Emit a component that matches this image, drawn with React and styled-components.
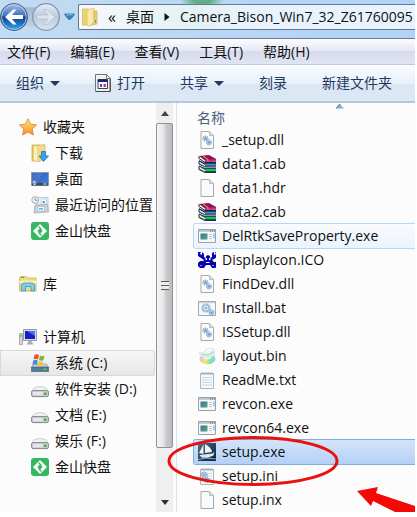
import React from 'react'
import styled, { createGlobalStyle, css } from 'styled-components'

const favorites = [
  { name: '收藏夹', icon: 'star', root: true },
  { name: '下载', icon: 'download' },
  { name: '桌面', icon: 'desktop' },
  { name: '最近访问的位置', icon: 'recent' },
  { name: '金山快盘', icon: 'kuaipan' },
]

const libraries = [{ name: '库', icon: 'library', root: true }]

const computer = [
  { name: '计算机', icon: 'computer', root: true },
  { name: '系统 (C:)', icon: 'system', active: true },
  { name: '软件安装 (D:)', icon: 'drive' },
  { name: '文档 (E:)', icon: 'drive' },
  { name: '娱乐 (F:)', icon: 'drive' },
  { name: '金山快盘', icon: 'kuaipan' },
]

const files = [
  { name: '_setup.dll', icon: 'dll' },
  { name: 'data1.cab', icon: 'cab' },
  { name: 'data1.hdr', icon: 'blank' },
  { name: 'data2.cab', icon: 'cab' },
  { name: 'DelRtkSaveProperty.exe', icon: 'exe', state: 'hover' },
  { name: 'DisplayIcon.ICO', icon: 'crab' },
  { name: 'FindDev.dll', icon: 'dll' },
  { name: 'Install.bat', icon: 'bat' },
  { name: 'ISSetup.dll', icon: 'dll' },
  { name: 'layout.bin', icon: 'bin' },
  { name: 'ReadMe.txt', icon: 'txt' },
  { name: 'revcon.exe', icon: 'exe' },
  { name: 'revcon64.exe', icon: 'exe' },
  { name: 'setup.exe', icon: 'installer', state: 'selected' },
  { name: 'setup.ini', icon: 'ini' },
  { name: 'setup.inx', icon: 'blank' },
]

const menus = ['文件(F)', '编辑(E)', '查看(V)', '工具(T)', '帮助(H)']

const Page = () => (
  <>
    <path d="M3 .5h8.500l4 4v13H3z" fill="#fafafa" stroke="#a9a9a9" />
    <path d="M11.500 .5v4h4z" fill="#dcdcdc" stroke="#bcbcbc" />
  </>
)

const Gear = ({ x, y, r }) => (
  <g fill="none">
    <circle cx={x} cy={y} r={r} stroke="#7da3c8" strokeWidth="1.200" strokeDasharray="1.200 .7" />
    <circle cx={x} cy={y} r={r - 0.8} fill="#d5e5f4" stroke="#7ea6cc" strokeWidth=".8" />
    <circle cx={x} cy={y} r=".8" fill="#3f6a97" />
  </g>
)

const Notepad = () => (
  <>
    <path d="M2.500 2.500h13v15h-13z" fill="#f7f9fb" stroke="#b0b4b8" />
    <path d="M4 1v3M6 1v3M8 1v3M10 1v3M12 1v3M14 1v3" stroke="#a0a4a8" strokeWidth=".8" />
    <path d="M4 6.500h10M4 9h10M4 11.500h10M4 14h10" stroke="#c3d9e8" />
  </>
)

const drawings = {
  star: (
    <path
      d="M9 .8l2.600 5.400 6 .7-4.400 4.100 1.200 6L9 14.100 3.600 17l1.200-6L.4 6.900l6-.7z"
      fill="url(#starFill)"
      stroke="#e08a3c"
      strokeWidth=".9"
    />
  ),
  download: (
    <>
      <path d="M1 1h8v16H1z" fill="#e9c75f" stroke="#c9a545" strokeWidth=".7" />
      <path d="M6 1.500l8-1v14l-6 3-5-1z" fill="#f3dc85" stroke="#d3b65a" strokeWidth=".7" />
      <path d="M2.500 1.500l4 1v15l-4-1z" fill="#fbf1c0" stroke="#d9c06c" strokeWidth=".5" />
      <path d="M10.500 7.500h4v4.500h3L12.500 17.500 8 12h2.500z" fill="#38a1ea" stroke="#1d72bd" strokeWidth=".8" />
    </>
  ),
  desktop: (
    <>
      <path d="M.5 2.500h17v13H.5z" fill="url(#screenFill)" stroke="#8093a9" strokeWidth=".8" />
      <path d="M1 3h11L5 13H1z" fill="#7da5e0" opacity=".25" />
      <path d="M1 13h16v2.500H1z" fill="#33485f" />
      <path d="M12 14h4" stroke="#d0d8df" />
      <circle cx="3.500" cy="13" r="1.900" fill="#dfe9ee" />
      <circle cx="3" cy="13.500" r="1" fill="#3b9fdb" />
      <circle cx="4.500" cy="12.500" r="1" fill="#ed6239" />
    </>
  ),
  recent: (
    <>
      <path d="M6 1.500h11v13H6z" fill="#f0f3f5" stroke="#c3c8cc" />
      <path d="M10 3h5.500v5H10z" fill="#fff" stroke="#b9d8ee" />
      <path d="M11.500 5h2.500v2h-2.500z" fill="#4aa5e3" />
      <path d="M4 9l12.500-.5 1 7.500-14.500 1z" fill="#cdd0d2" stroke="#a1a5a8" strokeWidth=".7" />
      <path d="M6.500 10.500h7V15h-7z" fill="#eef8fd" stroke="#93c2e0" strokeWidth=".7" />
      <path d="M8 12h4v1.500H8z" fill="#62b2df" />
      <circle cx="4.200" cy="4" r="3.400" fill="#f3f7fa" stroke="#9eabb7" />
      <path d="M4.200 2v2.300h2" fill="none" stroke="#5d6e7e" strokeWidth=".8" />
    </>
  ),
  kuaipan: (
    <>
      <rect width="18" height="18" rx="3" fill="#36b661" />
      <path d="M9 2.500L15.500 9 9 15.500 2.500 9z" fill="#fff" stroke="#fff" strokeLinejoin="round" />
      <path d="M9 6.300L11.700 9 9 11.700 6.300 9z" fill="#36b661" />
      <path d="M10.500 7.500l-3-3M7.500 10.500l3 3" stroke="#36b661" strokeWidth="1.200" />
    </>
  ),
  library: (
    <>
      <path d="M.5 2.500l1-1h6l1 1.500h8.500v13H.5z" fill="#f2d980" stroke="#cdb051" strokeWidth=".8" />
      <path d="M2 2.500h3" stroke="#4caf52" />
      <path d="M.5 5.500h17v3H.5z" fill="#fbefba" />
      <path d="M2.500 16V11q0-3 3-3h7q3 0 3 3v5h-3.500v-4.500H6.500V16z" fill="#83cdec" stroke="#3c9bc9" strokeWidth=".9" />
    </>
  ),
  computer: (
    <>
      <path d="M.5 5.500h3v11h-3z" fill="#d4d7da" stroke="#8e9499" strokeWidth=".7" />
      <path d="M1.200 7h1.600v1.500H1.200z" fill="#41bd37" />
      <path d="M4.500 1.500h13v11h-13z" fill="#dddde1" stroke="#9b9ba6" />
      <path d="M6 3h10v8H6z" fill="#1620c5" />
      <path d="M8 3h8v5z" fill="#4f6df0" />
      <path d="M9.500 13h3l2 3.500h-7z" fill="#adb0b4" />
    </>
  ),
  system: (
    <>
      <path d="M2.500 10h13l2 3.500H.5z" fill="#c9ced2" stroke="#8a9299" strokeWidth=".6" />
      <path d="M.5 13h17v4.500H.5z" fill="#4b7f93" stroke="#3f5763" strokeWidth=".6" />
      <path d="M12.500 14.500h3v1.500h-3z" fill="#53d14b" />
      <path d="M3.500 1q2-1.500 4.500 0L7 5.500q-2.500-1.500-4.500 0z" fill="#e8532d" />
      <path d="M9 1.500q2 1.500 4.500 0l-1 4.500q-2.500 1.500-4.500 0z" fill="#74b842" />
      <path d="M2.300 6.500q2-1.500 4.500 0l-1 4.500q-2-1.500-4.500 0z" fill="#3e8ddb" />
      <path d="M7.700 7q2.500 1.500 4.500 0l-1 4.500q-2 1.300-4.500 0z" fill="#f7bf35" />
    </>
  ),
  drive: (
    <>
      <path d="M3.500 7.500q5.500-2 11 0l3 4H.5z" fill="#f1f1f2" stroke="#bdbdbf" strokeWidth=".7" />
      <rect x=".6" y="10.600" width="16.800" height="6" rx="1.500" fill="#cfcfd6" stroke="#85858a" />
      <path d="M2 12h9v3H2z" fill="#e6e6ef" />
      <path d="M13 12.500h2.500V15H13z" fill="#48b52d" />
    </>
  ),
  dll: (
    <>
      <Page />
      <Gear x={7.5} y={7.5} r={2.4} />
      <Gear x={11} y={11.5} r={2.4} />
    </>
  ),
  cab: (
    <>
      <path d="M1 1L11 0l7 4v2.500L7 7z" fill="#8d1150" />
      <path d="M7 4.500h11v2H7z" fill="#c92f78" />
      <path d="M1 1l6 4.500V7L1 3.500z" fill="#f6f0ec" />
      <path d="M1 5l6 3 11-.5v4H7L1 9z" fill="#193f78" />
      <path d="M7 9h11v1.500H7z" fill="#3f97d3" />
      <path d="M1 6.500l6 3.500v1.500L1 8.500z" fill="#f6f0ec" />
      <path d="M1 10.500l6 2.500h11v4H7l-6-3z" fill="#0a5a40" />
      <path d="M7 14h11v2H7z" fill="#28b284" />
      <path d="M1 11.500L7 15v1.500L1 13.500z" fill="#f6f0ec" />
      <path d="M1 1v2.500l6 4h11M1 6v3l6 3h11M1 11v3.500l6 3h11" fill="none" stroke="#141414" strokeWidth=".9" />
      <path d="M5 1l5 3.500v2" fill="none" stroke="#dfb545" />
    </>
  ),
  blank: <Page />,
  exe: (
    <>
      <path d="M.5 2.500h17v13H.5z" fill="#f7f8f9" stroke="#9aa1a8" />
      <path d="M1 3h16v1.800H1z" fill="#b9c3cc" />
      <path d="M12 3.900h1M14 3.900h1M16 3.900h1" stroke="#4e6375" />
      <path d="M2.500 6.500h7v6h-7z" fill="url(#exeFill)" />
      <path d="M11 7.500h3M11 9.500h3M11 11.500h3" stroke="#bfc5ca" />
      <path d="M16 6.500v5" stroke="#6d9bc3" />
    </>
  ),
  crab: (
    <>
      <path
        d="M0 1h3l-1 2 2 1V1l2 2v3l2 1V5l2-1 2 1v2l2-1V2l2-1v3l2-1-1-2h2v5l-3 2-2 1 2 2h3l1 3-1 2-2 1h-3l-2-3H8l-2 3H2l-2-2v-3l2-2h3l1-1-3-2-3-2z"
        fill="#0605b0"
      />
      <path d="M7.500 7h1.500v2H7.500zM11 7h1.500v2H11zM8 11h3.500v1H8z" fill="#fff" />
      <path d="M2 14h2v1H2zM14 14h2v1h-2z" fill="#8f90e8" />
    </>
  ),
  bat: (
    <>
      <path d="M.5 2.500h17v14H.5z" fill="#f5f7f9" stroke="#a3a9af" />
      <path d="M1 3h16v1.200H1z" fill="#ccd5dd" />
      <Gear x={8} y={9} r={4} />
      <Gear x={13.5} y={13.5} r={2.5} />
    </>
  ),
  bin: (
    <>
      <ellipse cx="9.500" cy="12" rx="8" ry="5.200" fill="url(#discFill)" />
      <ellipse cx="9.500" cy="10.500" rx="4" ry="1.800" fill="#fff" />
      <path d="M1 6l5-.5 2-3 6-1.500 2.500 3-.5 5-5 2-8-1z" fill="#e4f3f1" stroke="#bcd9d9" strokeWidth=".6" />
      <path d="M3.500 7.500l7 .5 5-3" fill="none" stroke="#8fd0c0" />
      <path d="M8 4l5-1.500" stroke="#fff" strokeWidth="1.500" />
    </>
  ),
  txt: <Notepad />,
  ini: (
    <>
      <Notepad />
      <Gear x={6} y={8} r={3} />
      <Gear x={9} y={13} r={2.3} />
    </>
  ),
  installer: (
    <>
      <path d="M0 0h18v18H0z" fill="url(#setupFill)" />
      <path d="M5.500 1.500V11L1 10zM7 1v9l7-1Q13 4 7 1z" fill="#edf3f6" />
      <path d="M1.500 12l13-1.500 2-2-1 4-6 2.500-6-.5z" fill="#e0e8ed" />
      <path d="M0 16.500l8-1.500 10 1" stroke="#8ca9bd" fill="none" />
    </>
  ),
}

const Icon = ({ name }) => (
  <IconBox viewBox="0 0 18 18" aria-hidden="true">
    {drawings[name]}
  </IconBox>
)

const SharedFills = () => (
  <Defs aria-hidden="true">
    <defs>
      <linearGradient id="starFill" x1="0" y1="0" x2="0" y2="1">
        <stop offset="0" stopColor="#ffef9c" />
        <stop offset=".5" stopColor="#fdb94b" />
        <stop offset="1" stopColor="#f28a2c" />
      </linearGradient>
      <linearGradient id="screenFill" x1="0" y1="0" x2="1" y2="1">
        <stop offset="0" stopColor="#2d5eb4" />
        <stop offset="1" stopColor="#467fd8" />
      </linearGradient>
      <linearGradient id="exeFill" x1="0" y1="0" x2="1" y2="1">
        <stop offset="0" stopColor="#376fa0" />
        <stop offset="1" stopColor="#58ac78" />
      </linearGradient>
      <linearGradient id="discFill" x1="0" y1="0" x2="1" y2="0">
        <stop offset="0" stopColor="#f6b4c8" />
        <stop offset=".35" stopColor="#f8e57a" />
        <stop offset=".7" stopColor="#7fe3a6" />
        <stop offset="1" stopColor="#8fd6f3" />
      </linearGradient>
      <linearGradient id="setupFill" x1="0" y1="0" x2="1" y2="1">
        <stop offset="0" stopColor="#5b7387" />
        <stop offset=".6" stopColor="#1c3e59" />
        <stop offset="1" stopColor="#0b2336" />
      </linearGradient>
      <linearGradient id="backFill" x1="0" y1="0" x2="0" y2="1">
        <stop offset="0" stopColor="#a9c3e6" />
        <stop offset=".45" stopColor="#3d73c0" />
        <stop offset=".5" stopColor="#0c3f96" />
        <stop offset="1" stopColor="#35a8ee" />
      </linearGradient>
      <linearGradient id="forwardFill" x1="0" y1="0" x2="0" y2="1">
        <stop offset="0" stopColor="#e6eef7" />
        <stop offset=".5" stopColor="#b9cbe0" />
        <stop offset="1" stopColor="#d7e5f3" />
      </linearGradient>
    </defs>
  </Defs>
)

const Places = ({ items }) => (
  <PlaceGroup>
    {items.map((item) => (
      <li key={item.name}>
        <PlaceLink href="#" $root={item.root} $active={item.active}>
          <Icon name={item.icon} />
          {item.name}
        </PlaceLink>
      </li>
    ))}
  </PlaceGroup>
)

const App = () => {
  return (
    <>
      <GlobalStyle />
      <SharedFills />
      <Explorer>
        <AddressBar>
          <History>
            <HistoryButton aria-label="后退">
              <svg width="28" height="30" viewBox="0 0 28 30">
                <circle cx="14" cy="15" r="13.500" fill="url(#backFill)" stroke="#4a617d" />
                <circle cx="14" cy="15" r="12.300" fill="none" stroke="#bcd6f2" strokeWidth=".8" />
                <path d="M5 15l8-7.500h3.500L12 13h11v4H12l4.500 5.500H13z" fill="#fff" />
              </svg>
            </HistoryButton>
            <HistoryButton aria-label="前进">
              <svg width="28" height="30" viewBox="0 0 28 30">
                <circle cx="14" cy="15" r="13.300" fill="url(#forwardFill)" stroke="#8594a7" strokeWidth="1.200" />
                <path d="M23 15l-8-7.500h-3.500L16 13H5v4h11l-4.500 5.500H15z" fill="#dfe5ed" stroke="#b3c0ce" strokeWidth=".8" />
              </svg>
            </HistoryButton>
          </History>
          <HistoryMenu aria-label="最近的页面">
            <svg width="11" height="8" viewBox="0 0 11 8">
              <path d="M.5 1h10L8.500 4l-3 3-3-3z" fill="#2e86b8" stroke="#26577f" strokeWidth=".7" />
              <path d="M2 1.800h7" stroke="#8ec7e6" />
            </svg>
          </HistoryMenu>
          <PathField>
            <svg width="16" height="20" viewBox="0 0 16 20">
              <path d="M.5 2h6v16h-6z" fill="#eed270" stroke="#d1b357" strokeWidth=".7" />
              <path d="M5 3l7-2v14l-4 4-3-1z" fill="#f9e9a4" stroke="#d9bd63" strokeWidth=".7" />
              <path d="M12 4h3v13l-6 1 3-3z" fill="#eacb65" stroke="#d1b357" strokeWidth=".7" />
              <path d="M13.500 13v3" stroke="#4fa5cf" />
            </svg>
            <Chevrons>«</Chevrons>
            <PathButton>桌面</PathButton>
            <svg width="6" height="8" viewBox="0 0 6 8">
              <path d="M.5 0L5.500 4 .5 8z" fill="#111" />
            </svg>
            <PathButton>Camera_Bison_Win7_32_Z61760095</PathButton>
          </PathField>
        </AddressBar>

        <MenuBar>
          {menus.map((menu) => (
            <MenuButton key={menu}>{menu}</MenuButton>
          ))}
        </MenuBar>

        <ToolBar>
          <ToolButton>
            组织 <Caret />
          </ToolButton>
          <ToolButton>
            <svg width="16" height="18" viewBox="0 0 16 18">
              <path d="M.5 .5h11l4 4v13H.5z" fill="#f4f1e6" stroke="#77736b" />
              <path d="M11.500 .5v4h4z" fill="#fff" stroke="#77736b" />
              <path d="M15 5v12.500H1" fill="none" stroke="#444" />
              <path d="M3 5.500h9.500v9H3z" fill="#fff" stroke="#2d3e82" />
              <path d="M3 5.500h9.500v2.500H3z" fill="#12257e" />
              <path d="M5 10h2v3H5z" fill="#2f55cf" />
              <path d="M8.500 10h2.500v3H8.500z" fill="#e23a32" />
            </svg>
            打开
          </ToolButton>
          <ToolButton>
            共享 <Caret />
          </ToolButton>
          <ToolButton>刻录</ToolButton>
          <ToolButton>新建文件夹</ToolButton>
        </ToolBar>

        <Panes>
          <Sidebar>
            <Places items={favorites} />
            <Places items={libraries} />
            <Places items={computer} />
          </Sidebar>
          <ScrollBar>
            <ScrollButton aria-label="向上滚动">
              <svg width="8" height="5" viewBox="0 0 8 5">
                <path d="M0 5l4-5 4 5z" fill="#444" />
              </svg>
            </ScrollButton>
            <Thumb>
              <Grip />
            </Thumb>
            <ScrollButton aria-label="向下滚动">
              <svg width="8" height="5" viewBox="0 0 8 5">
                <path d="M0 0h8L4 5z" fill="#333" />
              </svg>
            </ScrollButton>
          </ScrollBar>
          <FilePane>
            <ColumnHeader>
              名称
              <SortMark viewBox="0 0 8 5" aria-hidden="true">
                <path d="M0 4.500L4 0l4 4.500z" fill="#82b5cf" />
                <path d="M0 4.500L4 0" stroke="#3c6d86" />
              </SortMark>
            </ColumnHeader>
            <FileList>
              {files.map((file) => (
                <li key={file.name}>
                  <FileButton $state={file.state}>
                    <Icon name={file.icon} />
                    {file.name}
                  </FileButton>
                </li>
              ))}
            </FileList>
          </FilePane>
        </Panes>

        <Markup viewBox="0 0 250 80" aria-hidden="true">
          <ellipse cx="88" cy="29" rx="84" ry="23.500" fill="none" stroke="#e8110f" strokeWidth="3" />
          <path d="M192 59l21-4-2 6 39 13v10l-20-4-22-11-2 5z" fill="#f40808" />
        </Markup>
      </Explorer>
    </>
  )
}

export default App

const GlobalStyle = createGlobalStyle`
  * {
    box-sizing: border-box;
  }

  body {
    margin: 0;
    background-color: #ffffff;
    color: #111111;
    font-family: "Open Sans", "Noto Sans CJK SC", sans-serif;
    font-size: 14px;
    line-height: 20px;
  }

  button {
    display: flex;
    align-items: center;
    padding: 0;
    border: none;
    background: none;
    color: inherit;
    font: inherit;
    white-space: nowrap;
  }

  ul {
    margin: 0;
    padding: 0;
    list-style: none;
  }

  svg {
    display: block;
    flex: none;
  }
`

const Defs = styled.svg`
  position: absolute;
  width: 0;
  height: 0;
`

const Explorer = styled.div`
  position: relative;
  display: flex;
  flex-direction: column;
  height: calc(100vh - 5px);
  margin-right: 2px;
  overflow: hidden;
`

const AddressBar = styled.div`
  display: flex;
  flex: none;
  height: 39px;
  padding-bottom: 4px;
  align-items: center;
  border-bottom: 1px solid #6d7b8c;
  background:
    radial-gradient(ellipse 22px 9px at 202px 0, #5fae86 40%, transparent 100%),
    linear-gradient(to right, #c3dbf3 0, #b0d3f8 100%);
`

const History = styled.div`
  display: flex;
  flex: none;
  gap: 4px;
  margin-right: 4px;
  border-radius: 15px;
  background: linear-gradient(transparent 15%, #a3b9d4 20%, #bdd0e6 80%, transparent 85%);
`

const HistoryButton = styled.button`
  flex: none;
`

const HistoryMenu = styled.button`
  flex: none;
  margin-right: 3px;
`

const PathField = styled.div`
  display: flex;
  flex: 1;
  min-width: 0;
  height: 26px;
  align-items: center;
  gap: 10px;
  padding-left: 3px;
  overflow: hidden;
  border: 1px solid #68788a;
  border-right: none;
  border-radius: 2px 0 0 2px;
  background: linear-gradient(to right, #f4f9fe 0, #e3f1f4 120px, #e9f3fd 160px);
`

const PathButton = styled.button`
  flex: none;
`

const Chevrons = styled.span`
  font-size: 16px;
`

const MenuBar = styled.div`
  display: flex;
  flex: none;
  height: 26px;
  align-items: center;
  gap: 20px;
  padding-left: 7px;
  border-bottom: 1px solid #c3c9d6;
  background: linear-gradient(#fcfdff 0, #e6e9f5 45%, #d7dbed 50%, #e0e4f3 100%);
`

const MenuButton = styled.button`
  flex: none;
`

const ToolBar = styled.div`
  display: flex;
  flex: none;
  height: 38px;
  align-items: center;
  gap: 35px;
  padding-left: 16px;
  border-bottom: 2px solid #b6c6db;
  background: linear-gradient(#fafcff 0, #e8f1fb 50%, #dbe6f4 55%, #dce8f6 100%);
  color: #1e395b;
`

const ToolButton = styled.button`
  flex: none;
  gap: 6px;
`

const Caret = styled.span`
  border: 5px solid transparent;
  border-top-color: #1e395b;
  border-bottom: none;
`

const Panes = styled.div`
  display: flex;
  flex: 1;
  min-height: 0;
  background-color: #fcfcfc;
`

const Sidebar = styled.nav`
  display: flex;
  flex: 0 0 156px;
  flex-direction: column;
  gap: 26px;
  padding-top: 10px;
`

const PlaceGroup = styled.ul`
  display: flex;
  flex-direction: column;
`

const PlaceLink = styled.a`
  display: flex;
  height: 26px;
  margin-right: 1px;
  align-items: center;
  gap: 6px;
  padding-left: ${(props) => (props.$root ? '19px' : '31px')};
  color: #111111;
  text-decoration: none;
  white-space: nowrap;

  ${(props) =>
    props.$root &&
    css`
      height: 27px;
    `}

  ${(props) =>
    props.$active &&
    css`
      border-radius: 0 3px 3px 0;
      background: linear-gradient(#f8f8f8, #e5e5e5);
      box-shadow: inset 0 0 0 1px #d8d8d8;
    `}
`

const IconBox = styled.svg`
  width: 18px;
  height: 18px;
`

const ScrollBar = styled.div`
  display: flex;
  flex: 0 0 17px;
  flex-direction: column;
  background-color: #efefef;
`

const ScrollButton = styled.button`
  flex: none;
  height: 20px;
  justify-content: center;
`

const Thumb = styled.div`
  display: flex;
  height: 325px;
  margin-bottom: auto;
  align-items: center;
  justify-content: center;
  border: 1px solid #929292;
  border-radius: 2px;
  background: linear-gradient(to right, #f6f6f6 0, #e4e4e6 45%, #cbcbcf 60%, #bcbcc0 100%);
`

const Grip = styled.div`
  width: 8px;
  height: 9px;
  background: repeating-linear-gradient(#5c5c5c 0, #5c5c5c 1px, #ececec 1px, #ececec 4px);
`

const FilePane = styled.main`
  display: flex;
  flex: 1;
  min-width: 0;
  flex-direction: column;
  margin-left: 3px;
  padding-left: 17px;
  border-left: 1px solid #d3e2f3;
`

const ColumnHeader = styled.button`
  position: relative;
  flex: none;
  height: 25px;
  padding: 5px 0 0 3px;
  color: #4c607a;
`

const SortMark = styled.svg`
  position: absolute;
  top: 1px;
  left: 142px;
  width: 8px;
  height: 5px;
`

const FileList = styled.ul`
  flex: none;
`

const FileButton = styled.button`
  width: 100%;
  height: 24px;
  gap: 6px;
  padding-left: 4px;
  border-radius: 2px 0 0 2px;

  ${(props) =>
    props.$state === 'hover' &&
    css`
      background: linear-gradient(#f9fbfe, #ebf3fd);
      box-shadow: 0 0 0 1px #b8d6fb;
    `}

  ${(props) =>
    props.$state === 'selected' &&
    css`
      background: linear-gradient(#d3e4fb, #b4d0f7);
      box-shadow: 0 0 0 1px #84acdd;
    `}
`

/* red pen marks over the list */
const Markup = styled.svg`
  position: absolute;
  top: 432px;
  left: 165px;
  width: 250px;
  height: 80px;
  pointer-events: none;
`
